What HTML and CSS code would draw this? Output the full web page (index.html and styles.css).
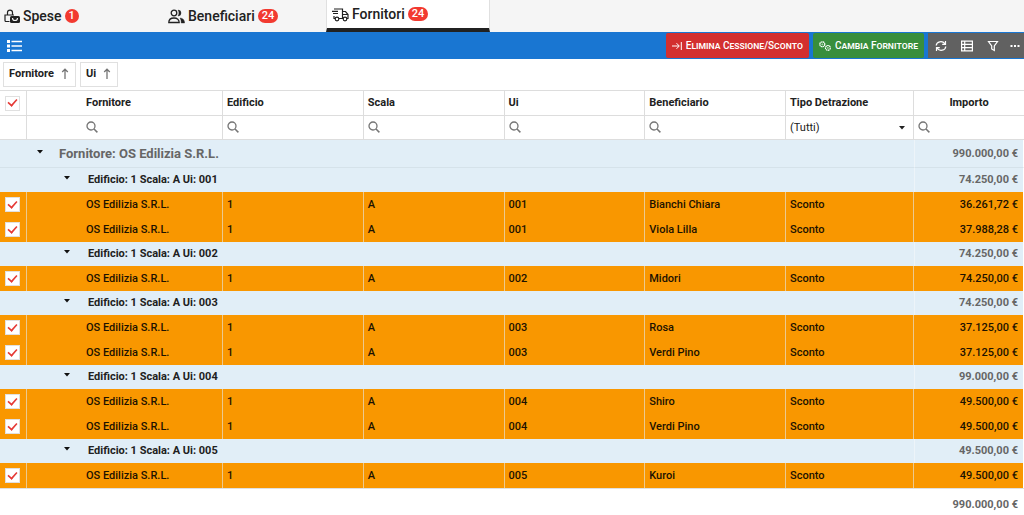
FILE: index.html
```html
<!DOCTYPE html>
<html lang="it">
<head>
<meta charset="utf-8">
<meta name="viewport" content="width=device-width, initial-scale=1">
<title>Fornitori</title>
<link rel="stylesheet" href="styles.css">
</head>
<body>
<svg class="sprite" aria-hidden="true">
  <symbol id="search" viewBox="0 0 12 12"><circle cx="5" cy="5" r="4" fill="none" stroke="currentColor" stroke-width="1.3"/><path d="M8 8l3.400 3.400" stroke="currentColor" stroke-width="1.500"/></symbol>
  <symbol id="arrow-up" viewBox="0 0 8 12"><path d="M4 11V1.500M1.200 4L4 1.200 6.800 4" fill="none" stroke="currentColor" stroke-width="1.300"/></symbol>
  <symbol id="caret" viewBox="0 0 6 4"><path d="M0 0h6L3 3.500z" fill="currentColor"/></symbol>
</svg>
<nav class="tabs" role="tablist">
  <button class="tab" role="tab" type="button">
    <svg class="tab-icon" viewBox="0 0 16 15" fill="none" stroke="currentColor" stroke-width="1.200"><path d="M5.500 12.500H2a1 1 0 0 1-1-1V6h9M3.500 6V3.600a2.500 2.500 0 0 1 5 0V6"/><rect x="6" y="7" width="10" height="7" rx="1.500" fill="currentColor" stroke="none"/><path d="M8.500 9a2.500 2.500 0 0 0 5 0" stroke="#f5f5f5"/></svg>
    <span>Spese</span><span class="badge">1</span>
  </button>
  <button class="tab" role="tab" type="button">
    <svg class="tab-icon tab-icon-wide" viewBox="0 0 17 15" fill="none" stroke="currentColor" stroke-width="1.300"><circle cx="6" cy="4" r="2.800"/><path d="M.8 13.500c0-3 2-4.500 5.200-4.500s5.200 1.500 5.200 4.500z"/><path d="M10 1a3 3 0 0 1 0 6c1.300-2 1.300-4 0-6zM12 9c3 .2 4.600 2 4.600 5h-3.400c0-2-.2-3.500-1.200-5z" fill="currentColor" stroke="currentColor" stroke-width=".4"/></svg>
    <span>Beneficiari</span><span class="badge">24</span>
  </button>
  <button class="tab tab-active" role="tab" type="button" aria-selected="true">
    <svg class="tab-icon tab-icon-wide" viewBox="0 0 17 15" fill="none" stroke="currentColor" stroke-width="1.200"><path d="M2 2h8.500v9.500H7M3 11.500H2V9M0 4.300h6M1 6.500h5M10.500 4.500h3L16 7.500v4h-1.200M10.500 7.500H16"/><circle cx="5" cy="12" r="1.800"/><circle cx="13" cy="12" r="1.800"/></svg>
    <span>Fornitori</span><span class="badge">24</span>
  </button>
</nav>
<div class="toolbar">
  <button class="menu-button" type="button" aria-label="Menu"><svg viewBox="0 0 15 12" fill="currentColor"><path d="M0 0h3v3H0zM0 4.500h3v3H0zM0 9h3v3H0zM4.500 .7H15v1.500H4.500zM4.500 5.200H15v1.500H4.500zM4.500 9.700H15v1.500H4.500z"/></svg></button>
  <div class="actions">
    <button class="action action-danger" type="button"><svg viewBox="0 0 10 10" fill="none" stroke="currentColor"><path d="M0 5h7M4.500 2.200L7.300 5 4.500 7.800M9.300 1v8"/></svg>Elimina Cessione/Sconto</button>
    <button class="action action-success" type="button"><svg class="gears" viewBox="0 0 12 10" fill="none" stroke="currentColor"><circle cx="3.300" cy="3.300" r="2.500" stroke-width="1.200" stroke-dasharray="1.600 .4"/><circle cx="3.300" cy="3.300" r=".5" stroke-width=".6"/><circle cx="8.900" cy="6.900" r="2.400" stroke-width="1.200" stroke-dasharray="1.500 .4"/><circle cx="8.900" cy="6.900" r=".5" stroke-width=".6"/></svg>Cambia Fornitore</button>
    <div class="tools">
      <button class="tool" type="button" aria-label="Aggiorna"><svg viewBox="0 0 12 12" fill="none" stroke="currentColor" stroke-width="1.200"><path d="M1.200 5.500C1.500 1.300 7.500.5 9.800 3.600M10.500 1v3.300H7.200M10.800 6.500c-.3 4.200-6.300 5-8.600 1.900M1.500 11V7.700h3.300"/></svg></button>
      <button class="tool" type="button" aria-label="Colonne"><svg viewBox="0 0 12 12" fill="none" stroke="currentColor" stroke-width="1.200"><path d="M.6 1.100h10.800v9.800H.6zM.6 4.400h10.800M.6 7.600h10.800M3.700 1.100v9.800"/></svg></button>
      <button class="tool" type="button" aria-label="Filtro"><svg viewBox="0 0 12 12" fill="none" stroke="currentColor" stroke-width="1.200"><path d="M1.500 1.500h9L7.300 6v4.500L4.700 9V6z"/></svg></button>
      <button class="tool tool-more" type="button" aria-label="Altro"><svg viewBox="0 0 12 12" fill="currentColor"><path d="M1.500 5h2v2h-2zM5 5h2v2H5zM8.500 5h2v2h-2z"/></svg></button>
    </div>
  </div>
</div>
<div class="group-panel">
  <button class="chip" type="button">Fornitore<svg><use href="#arrow-up"/></svg></button>
  <button class="chip" type="button">Ui<svg><use href="#arrow-up"/></svg></button>
</div>
<table class="grid">
  <colgroup><col class="col-check"><col class="col-supplier"><col><col><col><col><col class="col-type"><col class="col-amount"></colgroup>
  <thead>
    <tr class="head">
      <th class="check"><input type="checkbox" aria-label="Seleziona tutto" checked></th>
      <th class="indent">Fornitore</th><th>Edificio</th><th>Scala</th><th>Ui</th><th>Beneficiario</th><th>Tipo Detrazione</th><th class="center">Importo</th>
    </tr>
    <tr class="filter">
      <td></td>
      <td class="indent"><label class="search"><svg><use href="#search"/></svg><input type="text" aria-label="Filtra Fornitore"></label></td>
      <td><label class="search"><svg><use href="#search"/></svg><input type="text" aria-label="Filtra Edificio"></label></td>
      <td><label class="search"><svg><use href="#search"/></svg><input type="text" aria-label="Filtra Scala"></label></td>
      <td><label class="search"><svg><use href="#search"/></svg><input type="text" aria-label="Filtra Ui"></label></td>
      <td><label class="search"><svg><use href="#search"/></svg><input type="text" aria-label="Filtra Beneficiario"></label></td>
      <td><label class="pick"><select aria-label="Filtra Tipo Detrazione"><option>(Tutti)</option></select><svg class="caret"><use href="#caret"/></svg></label></td>
      <td><label class="search"><svg><use href="#search"/></svg><input type="text" aria-label="Filtra Importo"></label></td>
    </tr>
  </thead>
  <tbody>
    <tr class="group"><td colspan="7"><button class="toggle" type="button"><svg class="caret"><use href="#caret"/></svg>Fornitore: OS Edilizia S.R.L.</button></td><td class="amount">990.000,00 €</td></tr>
    <tr class="subgroup"><td colspan="7"><button class="toggle" type="button"><svg class="caret"><use href="#caret"/></svg>Edificio: 1 Scala: A Ui: 001</button></td><td class="amount">74.250,00 €</td></tr>
    <tr class="row"><td class="check"><input type="checkbox" aria-label="Bianchi Chiara" checked></td><td class="indent">OS Edilizia S.R.L.</td><td>1</td><td>A</td><td>001</td><td>Bianchi Chiara</td><td>Sconto</td><td class="amount">36.261,72 €</td></tr>
    <tr class="row"><td class="check"><input type="checkbox" aria-label="Viola Lilla" checked></td><td class="indent">OS Edilizia S.R.L.</td><td>1</td><td>A</td><td>001</td><td>Viola Lilla</td><td>Sconto</td><td class="amount">37.988,28 €</td></tr>
    <tr class="subgroup"><td colspan="7"><button class="toggle" type="button"><svg class="caret"><use href="#caret"/></svg>Edificio: 1 Scala: A Ui: 002</button></td><td class="amount">74.250,00 €</td></tr>
    <tr class="row"><td class="check"><input type="checkbox" aria-label="Midori" checked></td><td class="indent">OS Edilizia S.R.L.</td><td>1</td><td>A</td><td>002</td><td>Midori</td><td>Sconto</td><td class="amount">74.250,00 €</td></tr>
    <tr class="subgroup"><td colspan="7"><button class="toggle" type="button"><svg class="caret"><use href="#caret"/></svg>Edificio: 1 Scala: A Ui: 003</button></td><td class="amount">74.250,00 €</td></tr>
    <tr class="row"><td class="check"><input type="checkbox" aria-label="Rosa" checked></td><td class="indent">OS Edilizia S.R.L.</td><td>1</td><td>A</td><td>003</td><td>Rosa</td><td>Sconto</td><td class="amount">37.125,00 €</td></tr>
    <tr class="row"><td class="check"><input type="checkbox" aria-label="Verdi Pino, Ui 003" checked></td><td class="indent">OS Edilizia S.R.L.</td><td>1</td><td>A</td><td>003</td><td>Verdi Pino</td><td>Sconto</td><td class="amount">37.125,00 €</td></tr>
    <tr class="subgroup"><td colspan="7"><button class="toggle" type="button"><svg class="caret"><use href="#caret"/></svg>Edificio: 1 Scala: A Ui: 004</button></td><td class="amount">99.000,00 €</td></tr>
    <tr class="row"><td class="check"><input type="checkbox" aria-label="Shiro" checked></td><td class="indent">OS Edilizia S.R.L.</td><td>1</td><td>A</td><td>004</td><td>Shiro</td><td>Sconto</td><td class="amount">49.500,00 €</td></tr>
    <tr class="row"><td class="check"><input type="checkbox" aria-label="Verdi Pino, Ui 004" checked></td><td class="indent">OS Edilizia S.R.L.</td><td>1</td><td>A</td><td>004</td><td>Verdi Pino</td><td>Sconto</td><td class="amount">49.500,00 €</td></tr>
    <tr class="subgroup"><td colspan="7"><button class="toggle" type="button"><svg class="caret"><use href="#caret"/></svg>Edificio: 1 Scala: A Ui: 005</button></td><td class="amount">49.500,00 €</td></tr>
    <tr class="row"><td class="check"><input type="checkbox" aria-label="Kuroi" checked></td><td class="indent">OS Edilizia S.R.L.</td><td>1</td><td>A</td><td>005</td><td>Kuroi</td><td>Sconto</td><td class="amount">49.500,00 €</td></tr>
  </tbody>
  <tfoot>
    <tr class="total"><td colspan="7"></td><td class="amount">990.000,00 €</td></tr>
  </tfoot>
</table>
</body>
</html>
```

FILE: styles.css
```css
* { box-sizing: border-box; }
body { margin: 0; background: #fff; color: #212121; font: 500 11px/16px Roboto, "Liberation Sans", sans-serif; }
button, input, select { font: inherit; color: inherit; border: 0; margin: 0; padding: 0; background: none; }
svg { display: block; flex: none; }
.sprite { display: none; }

.tabs { display: flex; height: 32px; background: #f5f5f5; }
.tab { display: flex; align-items: center; gap: 3px; width: 164px; padding: 0 4px; font-size: 14px; }
.tab-active { background: #fff; border: solid #e0e0e0; border-width: 0 1px; border-bottom: 4px solid #212121; padding-left: 5px; margin-left: -2px; }
.tab-icon { width: 16px; height: 15px; }
.tab-icon-wide { width: 17px; }
.badge { min-width: 14px; height: 14px; padding: 0 4px; border-radius: 7px; background: #f23a30; color: #fff; font-size: 11px; line-height: 14px; text-align: center; }

.toolbar { display: flex; justify-content: space-between; align-items: stretch; height: 27px; padding: 1px 0; background: #1976d2; color: #fff; }
.menu-button { padding: 0 7px; }
.menu-button svg { width: 15px; height: 12px; }
.actions { display: flex; gap: 4px; }
.action { display: flex; align-items: center; gap: 4px; padding: 0 6px; border-radius: 2px; font-size: 10px; font-variant: small-caps; white-space: nowrap; }
.action svg { width: 10px; height: 10px; }
.action .gears { width: 12px; }
.action-danger { background: #d32f2f; }
.action-success { background: #388e3c; }
.tools { display: flex; background: #616161; }
.tool { display: flex; align-items: center; justify-content: center; width: 26px; }
.tool svg { width: 12px; height: 12px; }
.tool-more { width: 18px; }

.group-panel { display: flex; gap: 4px; padding: 3px; height: 31px; align-items: flex-start; }
.chip { display: flex; align-items: center; gap: 7px; height: 25px; padding: 0 6px 2px 5px; border: 1px solid #e0e0e0; font-weight: 700; }
.chip svg { width: 8px; height: 12px; color: #757575; }

.grid { width: 100%; table-layout: fixed; border-collapse: separate; border-spacing: 0; }
.col-check { width: 27px; }
.col-supplier { width: 196px; }
.col-type { width: 128px; }
.col-amount { width: 110px; }
.grid th, .grid td { padding: 0 4px; text-align: left; vertical-align: middle; white-space: nowrap; overflow: hidden; }
.grid .indent { padding-left: 59px; }
.grid .check { padding: 0 0 0 5px; }
.grid .center { text-align: center; }
.grid .amount { text-align: right; padding-right: 5px; }
.grid .total .amount { padding-right: 6px; }

.head th { height: 25px; border-top: 1px solid #ddd; border-right: 1px solid #ddd; font-weight: 700; }
.filter td { height: 25px; border: solid #ddd; border-width: 1px 1px 1px 0; }
.head th:last-child, .filter td:last-child { border-right: 0; }
.search { display: flex; align-items: center; gap: 4px; margin-bottom: 2px; }
.search svg { width: 12px; height: 12px; color: #757575; }
.search input { flex: 1; min-width: 0; outline: 0; }
.pick { display: flex; align-items: center; }
.pick select { flex: 1; min-width: 0; appearance: none; font-weight: 400; }
.caret { width: 6px; height: 4px; }
.pick .caret { margin-right: 4px; }

.check input { display: grid; place-items: center; appearance: none; width: 15px; height: 15px; border: 1px solid #e0e0e0; background: #fff; }
.check input:checked::before { content: ""; width: 9px; height: 5px; margin-bottom: 3px; border: solid #e53935; border-width: 0 0 2px 2px; transform: rotate(-48deg) scale(.8); }

.toggle { display: flex; align-items: center; font-weight: 700; }
.toggle .caret { margin-bottom: 4px; color: #111; }
.group td, .subgroup td { background: #e1eef7; }
.group td { height: 28px; border-bottom: 1px solid #d5e2ea; }
.group .toggle { gap: 16px; padding-left: 33px; color: #666; font-size: 13px; }
.subgroup td { height: 24px; }
.subgroup .toggle { gap: 18px; padding-left: 60px; }
.group .amount, .subgroup .amount { border-left: 1px solid #edf4f9; }
.group .amount, .subgroup .amount, .total .amount { color: #666; font-weight: 700; }
.row td { height: 25px; background: #f99700; border-right: 1px solid #ecc98f; color: #1c1200; }
.grid tbody td:last-child { border-right: 1px solid #fff; }
.total td { height: 32px; border-top: 1px solid #e0e0e0; }
```
